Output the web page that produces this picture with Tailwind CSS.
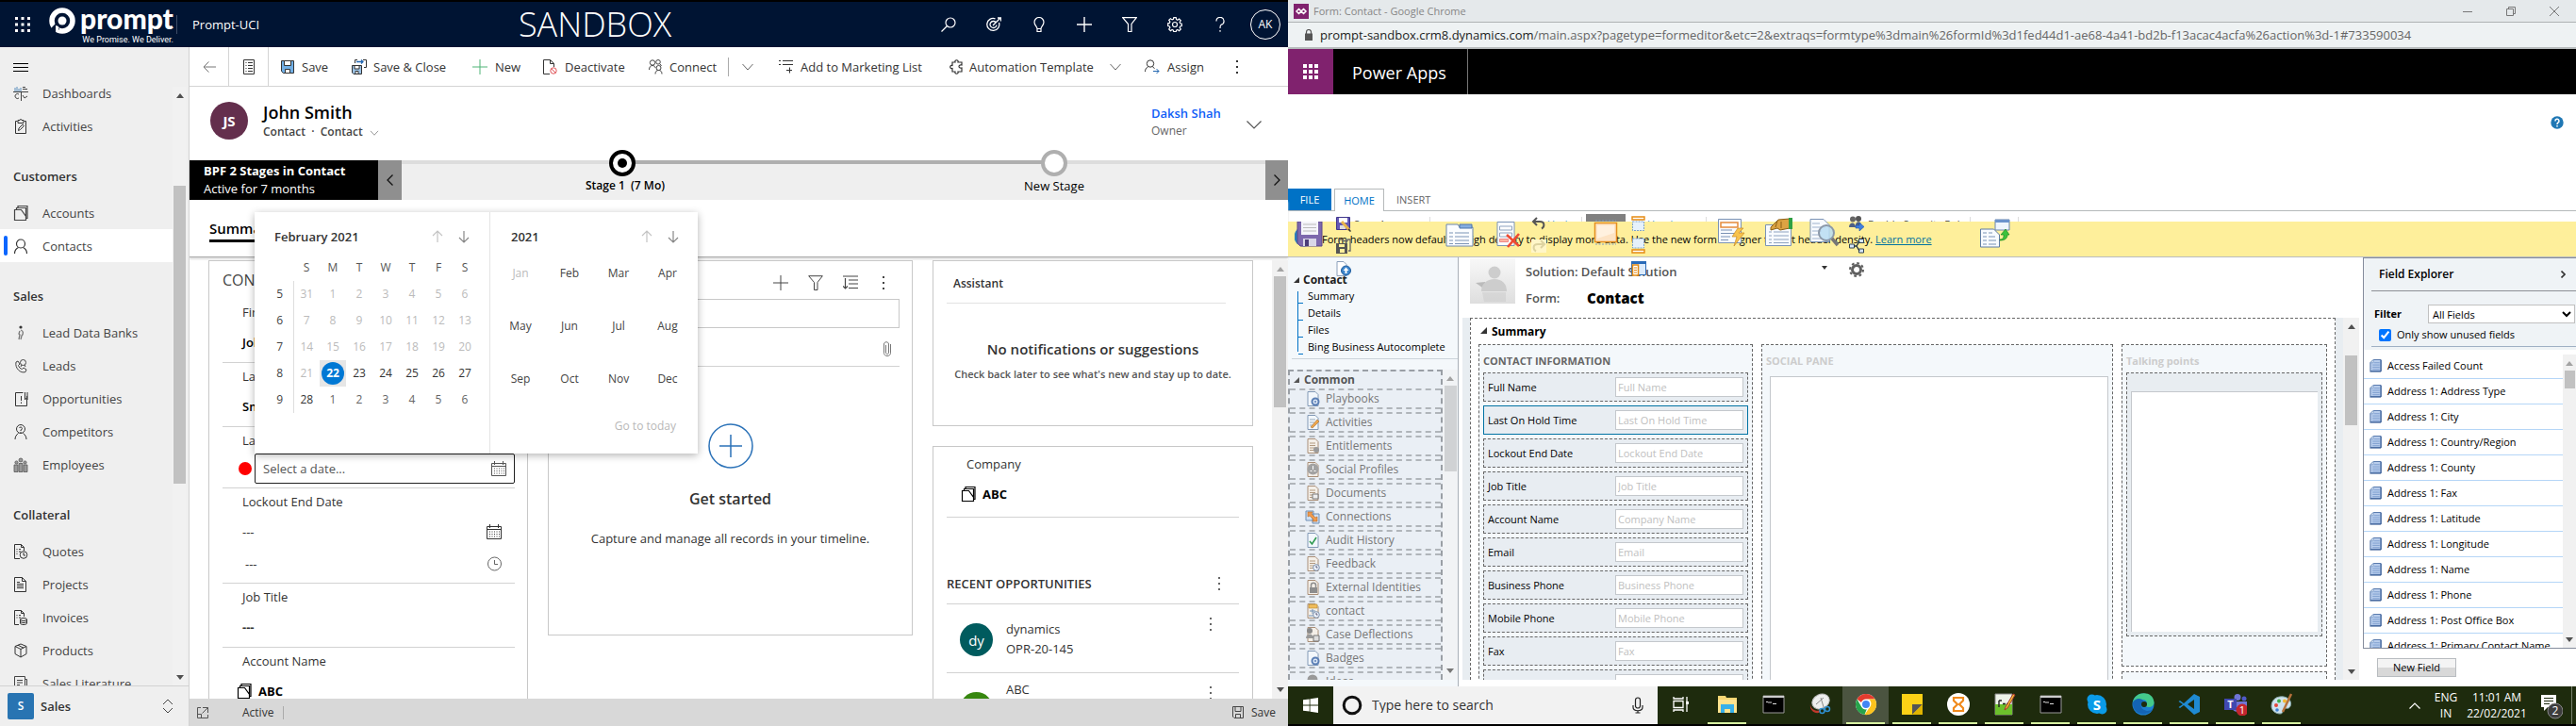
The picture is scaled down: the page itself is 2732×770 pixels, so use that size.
<!DOCTYPE html>
<html lang="en">
<head>
<meta charset="utf-8">
<title>Prompt-UCI and form editor</title>
<script src="https://cdn.jsdelivr.net/npm/@tailwindcss/browser@4"></script>
</head>
<body class="h-screen overflow-hidden flex bg-white font-['Open_Sans',sans-serif] text-[13px] leading-4 text-[#333]">

<svg class="hidden" aria-hidden="true">
  <symbol id="i-dash" viewBox="0 0 16 16"><path d="M2 2v4M4 1v5M6 3v3M8 2v4" stroke="#5b8fbd" fill="none"/><path d="M0 6.5h16M8.5 6v10M10 3.5h5M10 1.500h3" stroke="#444" fill="none"/><path d="M6 9a2.500 2.500 0 1 0 0 4M10 10l2 3 3-2" stroke="#444" fill="none"/></symbol>
  <symbol id="i-act" viewBox="0 0 16 16" fill="none" stroke="#333"><path d="M4.500 2.500h-2v13h11v-13h-2M5 1.500h2a1 1 0 0 1 2 0h2v3H5z"/><path d="M5.500 12.500l.5-2.500 4-4 1.500 1.500-4 4z"/></symbol>
  <symbol id="i-acc" viewBox="0 0 16 16" fill="none" stroke="currentColor" stroke-width="1.200"><path d="M1.500 4.500h7l5 7V15.500H1.500zM3.500 4.500v-2h10v11M5 2.500V.500h10v13h-1.500"/></symbol>
  <symbol id="i-con" viewBox="0 0 16 16" fill="none" stroke="#333" stroke-width="1.200"><circle cx="8" cy="5.500" r="4.500"/><path d="M1.500 16c0-3 2-5.500 4-6.500M14.500 16c0-3-2-5.500-4-6.500"/></symbol>
  <symbol id="i-lead" viewBox="0 0 16 16"><circle cx="8" cy="2" r="1.600" fill="#333"/><path d="M8 5c3 1 3 4 1 6l-1 4M7 6l-1 3 1 1-1 5" stroke="#777" fill="none" stroke-width="1.300"/></symbol>
  <symbol id="i-leads" viewBox="0 0 16 16" fill="none" stroke="#444"><path d="M3 4l2-1 2 3-1.500 1.500c.5 2 2 3.500 4 4L11 10l3 2-1 2.500c-5 2-11.500-4-10-10.500z"/><circle cx="10.500" cy="4.500" r="3"/><path d="M9 7l-1 2M12 7l1 2"/></symbol>
  <symbol id="i-opp" viewBox="0 0 16 16" fill="none" stroke="#333"><path d="M10.500 1.500h-8v14h12V5M12.500 1v8l1.200-1.500L15 9V1"/><path d="M8.500 5v5M8.500 11.500V13"/></symbol>
  <symbol id="i-comp" viewBox="0 0 16 16" fill="none" stroke="#333"><circle cx="8" cy="5" r="4.500"/><path d="M6.500 4a1.500 1.500 0 1 1 1.500 2v1M2 16c0-3 1.500-5 3.500-6.500M14 16c0-3-1.500-5-3.500-6.500M8 8v1"/></symbol>
  <symbol id="i-emp" viewBox="0 0 16 16" fill="#999" stroke="#555" stroke-width=".8"><circle cx="8" cy="3" r="2"/><circle cx="3.500" cy="5.500" r="1.600"/><circle cx="12.500" cy="5.500" r="1.600"/><path d="M6 15.500V6.500h4v9zM1 15.500V8h4v7.500zM11 15.500V8h4v7.500z"/></symbol>
  <symbol id="i-quote" viewBox="0 0 16 16" fill="none" stroke="#333"><path d="M7 15.500H1.500V.500h7l3 3V7M8.500.500v3h3M3.500 5.500h1M3.500 8h1M3.500 10.500h1M6 5.500h2M6 8h2"/><circle cx="11" cy="11.500" r="3.800"/><path d="M11 9v3h2"/></symbol>
  <symbol id="i-proj" viewBox="0 0 16 16" fill="none" stroke="#333"><path d="M1.500.500h8l4 4v11h-12zM9.500.500v4h4M4 7.500h7M4 9.500h7M4 11.500h7M4 5.500h3"/></symbol>
  <symbol id="i-inv" viewBox="0 0 16 16" fill="none" stroke="#333"><path d="M6 15.500H1.500V.500h7l3 3V7M8.500.500v3h3M3.500 5.500h1M3.500 8h1M6 5.500h2M6 8h2"/><ellipse cx="11" cy="10" rx="3.500" ry="1.500"/><path d="M7.500 10v4c0 2 7 2 7 0v-4M7.500 12c0 2 7 2 7 0"/></symbol>
  <symbol id="i-prod" viewBox="0 0 16 16" fill="none" stroke="#333"><path d="M8 1l6 2.500v8L8 15l-6-3.500v-8zM2 3.500L8 6.500l6-3M8 6.500V15M5 2.200l6 3"/></symbol>
  <symbol id="i-lit" viewBox="0 0 16 16" fill="none" stroke="#444"><path d="M1.500.500h11v3h2v12h-13zM4 4.500h6M4 7h6M4 9.500h3M12.500 3.500v12M8.500 10.500h3v5"/></symbol>
  <symbol id="i-down" viewBox="0 0 12 8" fill="none" stroke="currentColor"><path d="M.500 1l5.500 6 5.500-6"/></symbol>
  <symbol id="i-dots" viewBox="0 0 4 16" fill="currentColor"><path d="M1 1h2v2H1zM1 7h2v2H1zM1 13h2v2H1z"/></symbol>
  <symbol id="i-plus" viewBox="0 0 16 16" fill="none" stroke="currentColor"><path d="M8 0v16M0 8h16"/></symbol>
  <symbol id="i-filter" viewBox="0 0 16 16" fill="none" stroke="currentColor"><path d="M.700.700h14.600L10 7.500v8H6.500v-8z"/></symbol>
  <symbol id="i-cal" viewBox="0 0 16 16" fill="none" stroke="currentColor"><path d="M.500 2.500h15v13H.500zM.500 5.500h15M3.500 0v4M12.500 0v4"/><path d="M3 8h11M3 10.500h11M3 13h11" stroke-dasharray="1 1.500"/></symbol>
  <symbol id="i-up" viewBox="0 0 12 14" fill="none" stroke="currentColor" stroke-width="1.200"><path d="M6 1v12M1 6l5-5 5 5"/></symbol>
  <symbol id="i-dn" viewBox="0 0 12 14" fill="none" stroke="currentColor" stroke-width="1.200"><path d="M6 1v12M1 8l5 5 5-5"/></symbol>
  <symbol id="i-page" viewBox="0 0 13 15"><path d="M4 .500h8.500v13H.500V4z" fill="#b8cdec" stroke="#4a6fa5"/><path d="M.500 4H4V.500z" fill="#eef4fc" stroke="#6f91c2" stroke-width=".8"/><path d="M5 4h6M3 6.500h8M3 9h8M3 11.500h8" stroke="#7b9cce"/><path d="M12.500 1v13H0" fill="none" stroke="#2f5591"/></symbol>
</svg>

<!-- Customer record window -->
<section class="flex-1 min-w-0 h-full flex flex-col border-t-2 border-black">
  <header class="h-12 shrink-0 bg-[#001433] text-white flex items-center pl-4 pr-2">
    <button aria-label="App launcher"><svg class="w-4 h-4" viewBox="0 0 16 16" fill="#fff"><path d="M0 0h3v3H0zM6.500 0h3v3h-3zM13 0h3v3h-3zM0 6.500h3v3H0zM6.500 6.500h3v3h-3zM13 6.500h3v3h-3zM0 13h3v3H0zM6.500 13h3v3h-3zM13 13h3v3h-3z"/></svg></button>
    <div class="ml-5 w-[132px] flex items-start gap-[5px] h-10">
      <svg class="w-7 h-7 mt-[2px] shrink-0" viewBox="0 0 28 28"><circle cx="14" cy="14" r="11" fill="none" stroke="#fff" stroke-width="5.500"/><circle cx="14" cy="14" r="4.500" fill="#fff"/><path d="M7 17l-6 6 5 4 5-4z" fill="#001433"/><path d="M7 19v7h3v-6z" fill="#fff"/></svg>
      <div class="flex flex-col items-end">
        <span class="font-['Lato'] font-black text-[30px] leading-8 h-7 -mt-[3px]">prompt</span>
        <span class="font-['Roboto'] text-[9px] leading-3 h-3 mt-[5px]">We Promise. We Deliver.</span>
      </div>
    </div>
    <span class="w-px h-5 bg-[#3d4c66] ml-[3px]"></span>
    <span class="ml-4 text-[13px]">Prompt-UCI</span>
    <span class="flex-1 text-center text-[36px] leading-10 font-light pl-[5px]">SANDBOX</span>
    <nav class="flex items-center text-white">
      <button class="w-12 h-8 grid place-items-center" aria-label="Search"><svg class="w-4 h-4" viewBox="0 0 16 16" fill="none" stroke="#fff" stroke-width="1.200"><circle cx="10" cy="6" r="5"/><path d="M6.500 9.500L.500 15.500"/></svg></button>
      <button class="w-12 h-8 grid place-items-center" aria-label="Tasks"><svg class="w-4 h-4" viewBox="0 0 16 16" fill="none" stroke="#fff" stroke-width="1.300"><path d="M13.500 6a6.500 6.500 0 1 1-4-4.200M10 5.500a3.500 3.500 0 1 0 1 3M7 9l8-8M12 1h3.500v3.500"/></svg></button>
      <button class="w-12 h-8 grid place-items-center" aria-label="Ideas"><svg class="w-4 h-4" viewBox="0 0 16 16" fill="none" stroke="#fff" stroke-width="1.200"><path d="M6 12.500C6 10 3 9 3 5.500a5 5 0 0 1 10 0C13 9 10 10 10 12.500zM6 12.500v3h4v-3"/></svg></button>
      <button class="w-12 h-8 grid place-items-center" aria-label="Create"><svg class="w-4 h-4" stroke-width="1.400"><use href="#i-plus"/></svg></button>
      <button class="w-12 h-8 grid place-items-center" aria-label="Filter"><svg class="w-4 h-4" stroke-width="1.200"><use href="#i-filter"/></svg></button>
      <button class="w-12 h-8 grid place-items-center" aria-label="Settings"><svg class="w-4 h-4" viewBox="0 0 16 16" fill="none" stroke="#fff" stroke-width="1.200"><circle cx="8" cy="8" r="2.500"/><path d="M6.800.700h2.400l.4 2 1.300.6 1.700-1.200 1.700 1.700-1.200 1.700.6 1.300 1.600.4v2.400l-1.600.4-.6 1.300 1.200 1.700-1.700 1.700-1.700-1.200-1.300.6-.4 1.600H6.800l-.4-1.600-1.300-.6-1.700 1.200-1.700-1.700 1.200-1.700-.6-1.300-1.600-.4V6.800l1.600-.4.6-1.300-1.200-1.700 1.700-1.700 1.700 1.200 1.300-.6z"/></svg></button>
      <button class="w-12 h-8 grid place-items-center" aria-label="Help"><svg class="w-4 h-4" viewBox="0 0 16 16" fill="none" stroke="#fff" stroke-width="1.200"><path d="M4 4.500a4 4 0 1 1 5 3.800C8 8.800 8 9.500 8 12M8 14v1.800"/></svg></button>
      <button class="ml-2 w-8 h-8 rounded-full border border-white text-[12px] grid place-items-center">AK</button>
    </nav>
  </header>

  <div class="flex-1 min-h-0 flex">
    <!-- Site map -->
    <aside class="w-[201px] shrink-0 bg-[#efefef] border-r border-[#d2d2d2] flex flex-col">
      <button class="h-[42px] shrink-0 pl-[14px] pt-[1px]" aria-label="Collapse menu"><svg class="w-4 h-[10px]" viewBox="0 0 16 10" stroke="#000"><path d="M0 .500h16M0 4.500h16M0 8.500h16"/></svg></button>
      <div class="flex-1 min-h-0 flex overflow-hidden">
        <nav id="nav" class="flex-1 -mt-[11px] text-[14px]"></nav>
        <div class="w-[15px] mr-[2px] flex flex-col items-center bg-[#f1f1f1]">
          <svg class="w-2 h-[5px] mt-[7px]" viewBox="0 0 8 5"><path d="M4 0l4 5H0z" fill="#505050"/></svg>
          <span class="w-[13px] h-[316px] mt-[93px] bg-[#c1c1c1]"></span>
          <svg class="w-2 h-[5px] mt-auto mb-[6px]" viewBox="0 0 8 5"><path d="M4 5l4-5H0z" fill="#505050"/></svg>
        </div>
      </div>
      <button class="h-[43px] shrink-0 border-t border-[#d2d2d2] flex items-center px-2 text-[13px] font-semibold">
        <span class="w-7 h-7 bg-[#2874b2] rounded-[2px] text-white grid place-items-center text-[12px]">S</span>
        <span class="ml-[7px]">Sales</span>
        <svg class="w-3 h-4 ml-auto mr-[8px]" viewBox="0 0 12 16" fill="none" stroke="#444"><path d="M1 6l5-5 5 5M1 10l5 5 5-5"/></svg>
      </button>
    </aside>

    <main class="relative flex-1 min-w-0 flex flex-col bg-white">
      <div class="h-[42px] shrink-0 border-b border-[#d4d4d4] flex items-center text-[13px] whitespace-nowrap">
        <button class="w-[42px] h-full border-r border-[#d4d4d4] grid place-items-center" aria-label="Back"><svg class="w-[14px] h-3" viewBox="0 0 14 12" fill="none" stroke="#777"><path d="M14 6H1M6.500.500L1 6l5.500 5.500"/></svg></button>
        <button class="w-[42px] h-full border-r border-[#d4d4d4] grid place-items-center" aria-label="Form"><svg class="w-3 h-4" viewBox="0 0 12 16" fill="none" stroke="#333"><path d="M.500.500h11v15H.500zM2.500 3.500h1M2.500 6.500h1M2.500 9.500h1M2.500 12.500h1M5 3.500h5M5 6.500h5M5 9.500h5M5 12.500h5"/></svg></button>
        <button class="ml-[13px] w-[75px] flex items-center gap-2"><svg class="w-[14px] h-[14px]" viewBox="0 0 14 14"><path d="M.500.500h13v13H2.500l-2-2z" fill="#71afe5" stroke="#333"/><path d="M3.500.500h7v5h-7z" fill="#fff" stroke="#333"/><path d="M4.500 9.500h5v4h-5z" fill="#fff" stroke="#333"/></svg>Save</button>
        <button class="w-[128px] flex items-center gap-[7px]"><svg class="w-4 h-4" viewBox="0 0 16 16"><path d="M.500 6.500h10v9H2l-1.500-1.500z" fill="#9cc3e6" stroke="#333"/><path d="M3 6.500h5V10H3zM4 12.500h3v3H4z" fill="#fff" stroke="#333"/><path d="M3.500 4V.500H6M12 .500h3.500v8H13" fill="none" stroke="#333"/><path d="M5 2.500h7M10 .500l2 2-2 2" fill="none" stroke="#2266b0" stroke-width="1.300"/></svg>Save &amp; Close</button>
        <button class="w-[75px] flex items-center gap-2"><svg class="w-4 h-4 text-[#4fb477]"><use href="#i-plus"/></svg>New</button>
        <button class="w-[112px] flex items-center gap-2"><svg class="w-[15px] h-4" viewBox="0 0 15 16" fill="none"><path d="M7 15.500H.500V.500h7l4 4V8M7.500.500v4h4" stroke="#333"/><circle cx="11" cy="12" r="3.200" stroke="#e0565b"/><path d="M8.800 9.800l4.400 4.400" stroke="#e0565b"/></svg>Deactivate</button>
        <button class="w-[84px] flex items-center gap-[7px]"><svg class="w-[15px] h-4" viewBox="0 0 15 16" fill="none" stroke="#444"><circle cx="4" cy="3.500" r="2.700"/><circle cx="10" cy="2.800" r="2.300"/><circle cx="10.500" cy="9" r="2.500"/><path d="M.500 11c0-3 1.500-4.500 3.500-4.500S7 8 7 9M12 5l1.500 2M7 15.500c0-3 1.500-4 3.500-4s3.500 1 3.500 4"/></svg>Connect</button>
        <span class="w-px h-5 bg-[#aaa]"></span>
        <button class="w-[53px] pl-[14px]" aria-label="More connect options"><svg class="w-3 h-2 text-[#666]"><use href="#i-down"/></svg></button>
        <button class="w-[181px] flex items-center gap-[7px]"><svg class="w-4 h-[14px]" viewBox="0 0 16 14" fill="none" stroke="#333"><path d="M4 .500h11M4 4.500h11M0 .500h2M0 4.500h2M8 10.500h6M11.500 7.500v6"/></svg>Add to Marketing List</button>
        <button class="w-[170px] flex items-center gap-[7px]"><svg class="w-[14px] h-4" viewBox="0 0 14 16" fill="none" stroke="#333" stroke-width="1.200"><path d="M3 3h3c-1-3 4-3 3 0h4v3c-4-1-4 4 0 3v4H9c1 3-4 3-3 0H3V9.500c-3 1-3-4 0-3z"/></svg>Automation Template</button>
        <button class="w-[37px]" aria-label="More templates"><svg class="w-3 h-2 text-[#666]"><use href="#i-down"/></svg></button>
        <button class="w-[96px] flex items-center gap-2"><svg class="w-4 h-4" viewBox="0 0 16 16" fill="none" stroke="#333"><circle cx="6" cy="4.500" r="3.700"/><path d="M.500 13c0-2.500 1-4 3-5M8.500 8l2 1.500"/><path d="M9 12.500h6M12.500 10l2.500 2.500-2.500 2.500" stroke="#2266b0"/></svg>Assign</button>
        <button aria-label="More commands"><svg class="w-1 h-4"><use href="#i-dots"/></svg></button>
      </div>

      <div class="h-[78px] shrink-0 flex items-start pl-[22px] pr-7">
        <span class="mt-4 w-10 h-10 rounded-full bg-[#642f4d] text-white text-[15px] font-bold grid place-items-center">JS</span>
        <div class="ml-4 mt-[15px]">
          <h1 class="text-[18px] leading-6 font-semibold text-black">John Smith</h1>
          <p class="leading-[18px] text-[12px] font-semibold text-[#444]">Contact &nbsp;·&nbsp; Contact <svg class="inline w-[10px] h-[6px] ml-1 text-[#777]" viewBox="0 0 12 8"><use href="#i-down"/></svg></p>
        </div>
        <div class="ml-auto mt-[19px] w-[101px]">
          <a href="#" class="block leading-[18px] font-semibold text-[#1160f7]">Daksh Shah</a>
          <p class="text-[12px] leading-5 text-[#666]">Owner</p>
        </div>
        <button class="mt-9" aria-label="Expand header"><svg class="w-4 h-[9px]" viewBox="0 0 16 9" fill="none" stroke="#555" stroke-width="1.200"><path d="M.500.500L8 8 15.500.500"/></svg></button>
      </div>

      <div class="h-[42px] shrink-0 flex">
        <div class="w-[200px] bg-black text-white pl-[15px] pt-[2px] leading-[19px]">
          <p class="font-bold">BPF 2 Stages in Contact</p><p>Active for 7 months</p>
        </div>
        <button class="w-[25px] bg-[#8f8f8f] grid place-items-center" aria-label="Previous stage"><svg class="w-[7px] h-3" viewBox="0 0 7 12" fill="none" stroke="#111" stroke-width="1.300"><path d="M6.500.500L1 6l5.500 5.500"/></svg></button>
        <div class="flex-1 bg-[#efefef] flex text-black">
          <div class="flex-1">
            <div class="h-1 flex"><i class="flex-1 bg-[#ddd]"></i><i class="flex-1 bg-[#afafaf]"></i></div>
            <div class="ml-[10px] -mt-[15px] flex flex-col items-center">
              <button class="relative w-7 h-7 rounded-full border-4 border-black bg-white grid place-items-center" aria-label="Stage 1"><i class="w-[10px] h-[10px] rounded-full bg-black"></i></button>
              <span class="mt-[2px] pl-[6px] text-[12px] font-semibold">Stage 1 &nbsp;(7 Mo)</span>
            </div>
          </div>
          <div class="flex-1">
            <div class="h-1 flex"><i class="flex-1 bg-[#afafaf]"></i><i class="flex-1 bg-[#ddd]"></i></div>
            <div class="ml-[10px] -mt-[15px] flex flex-col items-center">
              <button class="relative w-7 h-7 rounded-full border-4 border-[#afafaf] bg-white" aria-label="New Stage"></button>
              <span class="mt-[2px]">New Stage</span>
            </div>
          </div>
        </div>
        <button class="w-6 bg-[#8f8f8f] grid place-items-center" aria-label="Next stage"><svg class="w-[7px] h-3" viewBox="0 0 7 12" fill="none" stroke="#111" stroke-width="1.300"><path d="M.500.500L6 6 .500 11.500"/></svg></button>
      </div>

      <div class="h-[61px] shrink-0 border-b border-[#aaa] shadow-[0_2px_2px_#ddd] pl-[21px] pt-[18px]">
        <button class="block h-[27px] leading-5 text-[15px] font-semibold text-black border-b-3 border-black">Summary</button>
      </div>

      <div class="flex-1 min-h-0 flex overflow-hidden pt-[3px]">
        <div class="flex-1 grid grid-cols-[339fr_387fr_340fr] gap-x-[21px] pl-5 pr-5 items-start">
          <section class="border border-b-0 border-[#c8c8c8] pl-[14px] pr-[13px] h-[470px]">
            <h2 class="h-10 flex items-center text-[16px] text-[#444]">CONTACT INFORMATION</h2>
            <div class="h-[68px] border-b border-[#d2d2d2] pl-[21px]"><p class="h-[29px] leading-[29px]">First Name</p><p class="h-[34px] leading-[34px] font-semibold text-black">John</p></div>
            <div class="h-[68px] border-b border-[#d2d2d2] pl-[21px]"><p class="h-[29px] leading-[29px]">Last Name</p><p class="h-[34px] leading-[34px] font-semibold text-black">Smith</p></div>
            <div class="h-[65px] border-b border-[#d2d2d2]">
              <label for="hold" class="block h-7 leading-7 pl-[21px]">Last On Hold Time</label>
              <div class="flex items-center">
                <i class="ml-[17px] w-[14px] h-[14px] rounded-full bg-[#f00] mr-[3px]"></i>
                <span class="flex-1 min-w-0 h-8 border border-[#222] rounded-[2px] flex items-center px-2">
                  <input id="hold" placeholder="Select a date..." class="flex-1 min-w-0 placeholder:text-[#555] outline-none">
                  <svg class="w-4 h-4 text-[#555]"><use href="#i-cal"/></svg>
                </span>
              </div>
            </div>
            <div class="h-[101px] border-b border-[#d2d2d2] pl-[21px] pr-[14px]">
              <p class="h-[29px] leading-[29px]">Lockout End Date</p>
              <div class="h-[34px] flex items-center justify-between"><span>---</span><svg class="w-4 h-4"><use href="#i-cal"/></svg></div>
              <div class="h-[34px] pl-[3px] flex items-center justify-between"><span>---</span><svg class="w-4 h-4" viewBox="0 0 16 16" fill="none" stroke="#666"><circle cx="8.500" cy="8" r="7"/><path d="M8.500 4v4.500H12"/></svg></div>
            </div>
            <div class="h-[68px] border-b border-[#d2d2d2] pl-[21px]"><p class="h-[29px] leading-[29px]">Job Title</p><p class="h-[34px] leading-[34px] font-bold">---</p></div>
            <div class="pl-[15px]"><p class="pl-[6px] h-[29px] leading-[29px]">Account Name</p><p class="h-[34px] flex items-center gap-[7px] font-bold text-black"><svg class="w-4 h-4"><use href="#i-acc"/></svg>ABC</p></div>
          </section>

          <section class="border border-[#c8c8c8] h-[398px] px-[13px]">
            <div class="h-10 flex items-center justify-end gap-[21px] pt-[5px] text-[#444]">
              <h2 class="mr-auto text-[15px]">Timeline</h2>
              <button aria-label="Add record"><svg class="w-4 h-4"><use href="#i-plus"/></svg></button>
              <button aria-label="Filter timeline"><svg class="w-4 h-4"><use href="#i-filter"/></svg></button>
              <button aria-label="Sort"><svg class="w-4 h-4" viewBox="0 0 16 16" fill="none" stroke="currentColor" stroke-width="1.200"><path d="M0 1h16M6 5h10M6 9h10M6 13.500h10M2.500 3v11M0 11.500l2.500 2.500L5 11.500"/></svg></button>
              <button class="mr-[15px] ml-[4px]" aria-label="Timeline options"><svg class="w-1 h-4"><use href="#i-dots"/></svg></button>
            </div>
            <input aria-label="Search timeline" class="w-full h-[31px] border border-[#c8c8c8]">
            <div class="h-[41px] border-b border-[#d2d2d2] flex items-center justify-end pr-[9px] pt-1"><svg class="w-2 h-4" viewBox="0 0 8 16" fill="none" stroke="#777"><path d="M7.500 3v9.500c0 4-7 4-7 0V3c0-3 5-3 5 0v9c0 2-3 2-3 0V4"/></svg></div>
            <div class="flex flex-col items-center">
              <button class="mt-[60px]" aria-label="Get started"><svg class="w-12 h-12" viewBox="0 0 48 48" fill="none" stroke="#2b72b8" stroke-width="1.500"><circle cx="24" cy="24" r="23"/><path d="M24 12v24M12 24h24"/></svg></button>
              <p class="mt-5 text-[16px] leading-6 font-semibold">Get started</p>
              <p class="mt-5 leading-5">Capture and manage all records in your timeline.</p>
            </div>
          </section>

          <div class="min-w-0">
            <section class="border border-[#c8c8c8] h-[176px] px-[14px]">
              <h2 class="h-[45px] mr-[14px] border-b border-[#e2e2e2] pl-[7px] flex items-center pt-1 font-semibold text-[12px]">Assistant</h2>
              <p class="mt-9 text-[15px] leading-6 font-semibold text-center">No notifications or suggestions</p>
              <p class="mt-[7px] text-[11px] text-center font-semibold text-[#555] whitespace-nowrap">Check back later to see what's new and stay up to date.</p>
            </section>
            <section class="mt-[21px] border border-b-0 border-[#c8c8c8] px-[14px] pt-[1px] h-[300px]">
              <p class="pl-[21px] h-[34px] leading-[34px]">Company</p>
              <p class="pl-[15px] h-[40px] border-b border-[#d2d2d2] pb-[9px] flex items-center gap-[7px] font-bold text-black"><svg class="w-4 h-4"><use href="#i-acc"/></svg>ABC</p>
              <div class="mt-[49px] h-[43px] border-b border-[#d2d2d2] flex items-center justify-between pr-[19px]"><h2 class="font-semibold">RECENT OPPORTUNITIES</h2><button aria-label="More"><svg class="w-1 h-4 text-[#666]"><use href="#i-dots"/></svg></button></div>
              <div class="h-[73px] border-b border-[#d2d2d2] flex items-start pl-[14px] pr-[28px]">
                <span class="mt-5 w-[35px] h-[35px] rounded-full bg-[#005b5e] text-white text-[15px] grid place-items-center">dy</span>
                <div class="ml-[14px] mt-4 leading-[21px]"><p>dynamics</p><p>OPR-20-145</p></div>
                <svg class="ml-auto mt-[13px] w-1 h-4 text-[#666]"><use href="#i-dots"/></svg>
              </div>
              <div class="flex items-start pl-[14px] pr-[28px]">
                <span class="mt-5 w-[35px] h-[35px] rounded-full bg-[#37870f]"></span>
                <p class="ml-[14px] mt-[7px] leading-[21px]">ABC</p>
                <svg class="ml-auto mt-[13px] w-1 h-4 text-[#666]"><use href="#i-dots"/></svg>
              </div>
            </section>
          </div>
        </div>
        <div class="w-[17px] flex flex-col items-center bg-[#f1f1f1]">
          <svg class="w-2 h-[5px] mt-[7px]" viewBox="0 0 8 5"><path d="M4 0l4 5H0z" fill="#a3a3a3"/></svg>
          <span class="w-[13px] h-[139px] mt-[5px] bg-[#c1c1c1]"></span>
          <svg class="w-2 h-[5px] mt-auto mb-[7px]" viewBox="0 0 8 5"><path d="M4 5l4-5H0z" fill="#505050"/></svg>
        </div>
      </div>

      <footer class="h-[29px] shrink-0 bg-[#d8d8d8] flex items-center px-[7px] text-[12px]">
        <button aria-label="Open in new window"><svg class="w-[14px] h-[14px]" viewBox="0 0 14 14" fill="none" stroke="#555"><path d="M5 1.500H1.500v11h11V9M7 1.500h5.500V7M12.500 1.500l-6 6M1.500 8.500h4v4"/></svg></button>
        <span class="ml-[35px]">Active</span><span class="ml-[10px] w-px h-[14px] bg-[#aaa]"></span>
        <button class="ml-auto mr-[6px] flex items-center gap-2"><svg class="w-3 h-[13px]" viewBox="0 0 12 13" fill="none" stroke="#444"><path d="M.500.500h11v12H2l-1.500-1.500zM3 .500v5h6v-5M3.500 12.500v-4h5v4"/></svg>Save</button>
      </footer>

      <!-- Date picker -->
      <div class="absolute left-[69px] top-[175px] w-[470px] h-[256px] bg-white shadow-[0_2px_8px_rgba(0,0,0,0.3)] flex text-[12px]">
        <div class="w-[250px] border-r border-[#e4e4e4] px-[13px] pt-[14px]">
          <div class="h-6 pl-2 flex items-center text-[13px] font-semibold"><span>February 2021</span>
            <button class="ml-auto w-7 grid place-items-center text-[#c4c4c4]" aria-label="Previous month"><svg class="w-3 h-[14px]"><use href="#i-up"/></svg></button>
            <button class="w-7 grid place-items-center text-[#888]" aria-label="Next month"><svg class="w-3 h-[14px]"><use href="#i-dn"/></svg></button></div>
          <table class="mt-[7px] table-fixed w-[224px] border-collapse text-center"><tbody id="cal"></tbody></table>
        </div>
        <div class="flex-1 px-[6px] pt-[14px]">
          <div class="h-6 pl-4 pr-[6px] flex items-center text-[13px] font-semibold"><span>2021</span>
            <button class="ml-auto w-7 grid place-items-center text-[#c4c4c4]" aria-label="Previous year"><svg class="w-3 h-[14px]"><use href="#i-up"/></svg></button>
            <button class="w-7 grid place-items-center text-[#888]" aria-label="Next year"><svg class="w-3 h-[14px]"><use href="#i-dn"/></svg></button></div>
          <div id="months" class="-mt-px grid grid-cols-4"></div>
          <p class="text-right pr-[17px] mt-[14px]"><button class="text-[#b8b8b8]">Go to today</button></p>
        </div>
      </div>
    </main>
  </div>
</section>

<!-- Form editor window -->
<section class="flex-1 min-w-0 h-full flex flex-col">
  <div class="h-6 shrink-0 bg-[#e5e9eb] border-b border-[#aeb2b3] flex items-center pl-[6px] text-[12px] text-[#858585]">
    <svg class="w-4 h-4" viewBox="0 0 16 16"><path d="M0 0h16v16H0z" fill="#80226e"/><path d="M5.500 5.500L8 8l-2.500 2.500L3 8zM10.500 5.500L13 8l-2.500 2.500L8 8z" fill="none" stroke="#fff" stroke-width="1.500"/></svg>
    <span class="ml-[5px] text-[11px]">Form: Contact - Google Chrome</span>
    <button class="ml-auto w-[46px] grid place-items-center" aria-label="Minimize"><svg class="w-[10px] h-[10px]" viewBox="0 0 10 10" stroke="#777"><path d="M0 5.500h10"/></svg></button>
    <button class="w-[46px] grid place-items-center" aria-label="Restore"><svg class="w-[10px] h-[10px]" viewBox="0 0 10 10" stroke="#777" fill="none"><path d="M.500 2.500h7v7h-7zM2.500 2.500v-2h7v7h-2"/></svg></button>
    <button class="w-[46px] grid place-items-center" aria-label="Close"><svg class="w-[10px] h-[10px]" viewBox="0 0 10 10" stroke="#777"><path d="M0 0l10 10M10 0L0 10"/></svg></button>
  </div>
  <div class="h-7 shrink-0 bg-[#eef2f3] border-b-2 border-[#b5b9ba] flex items-center pl-[18px] text-[13px] text-[#666]">
    <svg class="w-2 h-3" viewBox="0 0 8 12"><path d="M0 4.500h8V12H0z" fill="#555"/><path d="M1.500 5V3a2.500 2.500 0 0 1 5 0v2" fill="none" stroke="#555" stroke-width="1.200"/></svg>
    <span class="ml-2 whitespace-nowrap"><span class="text-[#222]">prompt-sandbox.crm8.dynamics.com</span>/main.aspx?pagetype=formeditor&amp;etc=2&amp;extraqs=formtype%3dmain%26formId%3d1fed44d1-ae68-4a41-bd2b-f13acac4acfa%26action%3d-1#733590034</span>
  </div>
  <div class="h-12 shrink-0 bg-black flex items-center text-white text-[18px]">
    <button class="w-12 h-12 bg-[#80226e] grid place-items-center" aria-label="App launcher"><svg class="w-4 h-4" viewBox="0 0 16 16" fill="#fff"><path d="M0 0h4v4H0zM6 0h4v4H6zM12 0h4v4h-4zM0 6h4v4H0zM6 6h4v4H6zM12 6h4v4h-4zM0 12h4v4H0zM6 12h4v4H6zM12 12h4v4h-4z"/></svg></button>
    <span class="w-[143px] pl-5 h-12 leading-[50px] border-r border-[#777]">Power Apps</span>
  </div>
  <div class="h-[100px] shrink-0 flex justify-end pt-[23px] pr-[13px]"><svg class="w-[14px] h-[14px]" viewBox="0 0 14 14"><circle cx="7" cy="7" r="6.700" fill="#1f77b4"/><path d="M5 5.500a2 2 0 1 1 3 1.500C7 7.700 7 8 7 9M7 10v1.500" fill="none" stroke="#fff" stroke-width="1.500"/></svg></div>
  <div class="h-6 shrink-0 flex text-[11px] leading-6 border-b border-[#b5b9ba]">
    <button class="w-[46px] bg-[#0072c6] text-white">FILE</button>
    <button class="ml-[3px] w-[53px] h-6 bg-white border border-b-0 border-[#b5b9ba] text-[#0072c6]">HOME</button>
    <button class="ml-[13px] text-[#666]">INSERT</button>
  </div>

  <div class="relative shrink-0 z-10">
    <div class="h-[11px] overflow-hidden flex text-[11px] text-[#444] leading-4 pt-[6px] whitespace-nowrap">
      <span class="pl-[70px] w-[151px] border-r border-[#ddd] shrink-0">Save As</span>
      <span class="pl-[124px] w-[161px] border-r border-[#ddd] shrink-0 text-[#3b8fd0]">Undo</span>
      <span class="w-[42px] bg-[#808080] ml-1 h-4 -mt-[3px] shrink-0"></span>
      <span class="pl-[23px] w-[86px] border-r border-[#ddd] shrink-0 text-[#3b8fd0]">Header</span>
      <span class="pl-[171px] w-[280px] border-r border-[#ddd] shrink-0">Enable Security Roles</span>
      <span class="w-[51px] border-r border-[#ddd] shrink-0"></span>
    </div>
    <div class="h-[38px] bg-[#feef9b] border-b border-[#b9bcc0] pl-[36px] text-[11px] leading-[38px] text-black whitespace-nowrap">Form headers now default to high density to display more data. Use the new form designer to edit header density. <a href="#" class="text-[#0072a0] underline">Learn more</a></div>
    <div id="ribbon"></div>
  </div>

  <div class="flex-1 min-h-0 flex">
    <!-- Form navigation -->
    <aside class="w-[181px] shrink-0 bg-[#f4f8fb] border-r border-[#a9b0b8] text-[12px] text-black flex flex-col">
      <h2 class="mt-[15px] pl-[6px] flex items-center gap-1 leading-[18px] font-bold text-[#222]"><svg class="w-[6px] h-[6px]" viewBox="0 0 6 6"><path d="M6 0v6H0z" fill="#333"/></svg>Contact</h2>
      <div id="tree" class="ml-[10px] border-l border-[#0072c6] h-[64px] mt-[3px] text-[11px] leading-[18px] flex flex-col"></div>
      <div class="mt-[7px] ml-1 border-t border-[#ccd3da] h-3 shrink-0"></div>
      <div class="flex-1 min-h-0 flex mb-[7px] overflow-hidden">
        <div class="w-[164px] shrink-0 border-t-2 border-x-2 border-dashed border-[#9a9fa5] bg-[#eaeff5]">
          <h2 class="h-[18px] pl-1 flex items-center gap-[5px] font-bold text-[#555]"><svg class="w-[6px] h-[6px]" viewBox="0 0 6 6"><path d="M6 0v6H0z" fill="#555"/></svg>Common</h2>
          <ul id="common" class="text-[#777]"></ul>
        </div>
        <div class="flex-1 flex flex-col items-center bg-[#f1f3f5]">
          <svg class="w-2 h-[5px] mt-[7px]" viewBox="0 0 8 5"><path d="M4 0l4 5H0z" fill="#a3a3a3"/></svg>
          <span class="w-[13px] h-[91px] mt-[5px] bg-[#d0d2d4]"></span>
          <svg class="w-2 h-[5px] mt-auto mb-[7px]" viewBox="0 0 8 5"><path d="M4 5l4-5H0z" fill="#777"/></svg>
        </div>
      </div>
    </aside>

    <main class="flex-1 min-w-0 pl-1 pr-1 flex flex-col mb-[7px]">
      <div class="h-16 shrink-0 flex pl-2 pt-[1px]">
        <svg class="w-12 h-12" viewBox="0 0 48 48"><defs><linearGradient id="ph" x2="0" y2="1"><stop stop-color="#f8f8f8"/><stop offset="1" stop-color="#dedede"/></linearGradient></defs><path d="M0 0h48v48H0z" fill="url(#ph)"/><path d="M6 26l10-1v8z" fill="#bbb"/><circle cx="26" cy="15" r="6.500" fill="#cdcdcd"/><path d="M12 35c0-8 6-13 14-13s13 5 13 13z" fill="#cdcdcd"/><path d="M13 36h25v10H15z" fill="#c9c9c9" opacity=".5"/></svg>
        <div class="ml-[11px] leading-[28px] text-[13px] font-semibold text-[#555]">
          <p>Solution: Default Solution</p>
          <p class="flex"><span class="w-[65px]">Form:</span><b class="text-[15px] text-black">Contact</b></p>
        </div>
      </div>
      <div class="flex-1 min-h-0 flex bg-[#e8edf1] pl-2 overflow-hidden">
        <section class="flex-1 min-w-0 mr-2 bg-white border border-b-0 border-dashed border-[#666] px-2">
          <h2 class="h-[27px] pt-px pl-[2px] flex items-center gap-[5px] text-[12px] font-bold text-black"><svg class="w-[7px] h-[7px] mb-1" viewBox="0 0 6 6"><path d="M6 0v6H0z" fill="#333"/></svg>Summary</h2>
          <div class="grid grid-cols-[291fr_373fr_218fr] gap-x-[9px]">
            <div class="h-[400px] border border-dashed border-[#666] bg-[#f4f8fb] px-1 text-[11px]">
              <h3 class="h-[29px] leading-[33px] font-bold text-[#666]">CONTACT INFORMATION</h3>
              <div id="fields" class="flex flex-col gap-1"></div>
            </div>
            <div class="h-[400px] border border-dashed border-[#666] bg-[#f4f8fb] px-1 text-[11px]">
              <h3 class="h-[33px] leading-[33px] font-bold text-[#ccc]">SOCIAL PANE</h3>
              <div class="ml-1 h-[380px] bg-white border border-[#c4c8cc]"></div>
            </div>
            <div>
              <div class="h-[342px] border border-dashed border-[#666] bg-[#f4f8fb] px-1 text-[11px]">
                <h3 class="h-[29px] leading-[33px] font-bold text-[#ccc]">Talking points</h3>
                <div class="h-[280px] border border-dashed border-[#666] bg-[#e8edf1] px-1 pt-[19px] pb-1"><div class="h-full bg-white border-l border-t border-[#c4c8cc]"></div></div>
              </div>
              <div class="mt-[5px] h-12 border border-dashed border-[#666] bg-[#f4f8fb]"></div>
            </div>
          </div>
        </section>
        <div class="w-[17px] flex flex-col items-center bg-[#f1f1f1]">
          <svg class="w-2 h-[5px] mt-[7px]" viewBox="0 0 8 5"><path d="M4 0l4 5H0z" fill="#505050"/></svg>
          <span class="w-[13px] h-[74px] mt-7 bg-[#c1c1c1]"></span>
          <svg class="w-2 h-[5px] mt-auto mb-[6px]" viewBox="0 0 8 5"><path d="M4 5l4-5H0z" fill="#505050"/></svg>
        </div>
      </div>
    </main>

    <!-- Field explorer -->
    <aside class="w-[226px] shrink-0 flex flex-col text-[11px] text-black">
      <div class="h-[415px] border border-r-0 border-[#858c9c] bg-[#eff3f6] flex flex-col overflow-hidden">
        <div class="ml-2 pl-2 pr-[11px] h-[35px] shrink-0 border-b border-[#8d9096] flex items-center justify-between"><h2 class="font-semibold text-[12px]">Field Explorer</h2><button aria-label="Collapse"><svg class="w-[5px] h-2" viewBox="0 0 5 8" fill="none" stroke="#333" stroke-width="1.600"><path d="M.500.500L4 4 .500 7.500"/></svg></button></div>
        <div class="ml-2 pl-[3px] h-[59px] shrink-0 border-b border-[#9fb0c4]">
          <div class="mt-[14px] flex items-center"><label for="filter" class="w-[57px] font-bold">Filter</label><select id="filter" class="flex-1 mr-px h-5 bg-white border border-[#c0c0c0] text-[11px]"><option>All Fields</option></select></div>
          <div class="mt-1 pl-[5px] flex items-center gap-[6px]"><input id="unused" type="checkbox" checked class="w-[13px] h-[13px] accent-[#0075ff]"><label for="unused">Only show unused fields</label></div>
        </div>
        <div class="mt-[3px] flex-1 min-h-0 bg-white flex overflow-hidden">
          <ul id="attrs" class="flex-1"></ul>
          <div class="w-[14px] mt-[5px] flex flex-col items-center bg-[#f1f1f1]">
            <svg class="w-2 h-[5px] mt-[7px] shrink-0" viewBox="0 0 8 5"><path d="M4 0l4 5H0z" fill="#a3a3a3"/></svg>
            <span class="w-[11px] h-[19px] mt-[5px] bg-[#c1c1c1]"></span>
            <svg class="w-2 h-[5px] mt-auto mb-[6px]" viewBox="0 0 8 5"><path d="M4 5l4-5H0z" fill="#505050"/></svg>
          </div>
        </div>
      </div>
      <button class="mt-[10px] ml-[15px] w-[84px] h-5 border border-[#b8bcc0] bg-linear-to-b from-[#f4f4f4] from-50% to-[#d8d8d8] to-50%">New Field</button>
    </aside>
  </div>

  <!-- Taskbar -->
  <div class="h-[42px] shrink-0 bg-[#1e2b0d] border-b-2 border-black flex text-white text-[12px]">
    <button class="w-12 grid place-items-center" aria-label="Start"><svg class="w-4 h-4" viewBox="0 0 16 16" fill="#fff"><path d="M0 2.300l6.700-.9v6H0zM7.500 1.300L16 0v7.400H7.500zM0 8.400h6.700v6.200L0 13.700zM7.500 8.400H16V16l-8.500-1.200z"/></svg></button>
    <div class="w-[344px] bg-[#f2f2f2] flex items-center px-[9px]">
      <svg class="w-[22px] h-[22px]" viewBox="0 0 22 22"><circle cx="11" cy="11" r="8.800" fill="none" stroke="#111" stroke-width="3"/></svg>
      <input aria-label="Type here to search" placeholder="Type here to search" class="ml-[10px] flex-1 text-[14px] placeholder:text-[#333] outline-none">
      <svg class="w-3 h-[18px] mr-[6px]" viewBox="0 0 12 18" fill="none" stroke="#222" stroke-width="1.200"><rect x="3.500" y="1" width="5" height="11" rx="2.500"/><path d="M1 9v2c0 5 10 5 10 0V9M6 14.500V17M3.500 17h5"/></svg>
    </div>
    <div id="apps" class="flex"></div>
    <div class="ml-auto flex items-center text-center leading-[17px]">
      <svg class="w-3 h-[7px] mr-[13px]" viewBox="0 0 12 7" fill="none" stroke="#fff" stroke-width="1.200"><path d="M.500 6.500L6 1l5.500 5.500"/></svg>
      <p class="w-7">ENG<br>IN</p>
      <p class="w-[80px]">11:01 AM<br>22/02/2021</p>
      <svg class="w-6 h-8 ml-[6px] mr-[9px]" viewBox="0 0 24 32"><path d="M1 5h16v13h-9l-4 4v-4H1z" fill="#fff"/><path d="M4 8.500h10M4 11.500h10M4 14.500h6" stroke="#1e2b0d"/><circle cx="16" cy="22" r="8" fill="#3d3d3d" stroke="#888"/><text x="16" y="26" font-size="12" text-anchor="middle" fill="#fff">2</text></svg>
      <i class="w-px h-full bg-[#77806c] mr-1"></i>
    </div>
  </div>
</section>

<script>
const $ = id => document.getElementById(id);
const put = (id, rows) => { $(id).innerHTML = rows.join(''); };

put('nav', [
  ['dash','Dashboards'],['act','Activities'],['#','Customers'],['acc','Accounts'],['con','Contacts'],['#','Sales'],
  ['lead','Lead Data Banks'],['leads','Leads'],['opp','Opportunities'],['comp','Competitors'],['emp','Employees'],['#','Collateral'],
  ['quote','Quotes'],['proj','Projects'],['inv','Invoices'],['prod','Products'],['lit','Sales Literature']
].map(([i, t]) => i === '#'
  ? `<h2 class="h-[57px] pt-[14px] pl-[14px] flex items-center text-[13px] font-semibold">${t}</h2>`
  : `<a href="#" class="${t === 'Contacts' ? 'bg-white' : ''} h-[35px] flex items-center pl-1 text-[13px] text-[#444]"><i class="w-1 h-[21px] rounded-sm mr-[6px] ${t === 'Contacts' ? 'bg-[#0b66ff]' : ''}"></i><svg class="w-4 h-4 mr-[15px]"><use href="#i-${i}"/></svg>${t}</a>`));

const weeks = [[5,31,1,2,3,4,5,6],[6,7,8,9,10,11,12,13],[7,14,15,16,17,18,19,20],[8,21,22,23,24,25,26,27],[9,28,1,2,3,4,5,6]];
put('cal', ['<tr class="h-7"><th></th>' + [...'SMTWTFS'].map(d => `<th class="font-normal text-[#555]">${d}</th>`).join('') + '</tr>',
  ...weeks.map((w, r) => '<tr class="h-7">' + w.map((d, c) => {
    if (c === 0) return `<th class="font-normal text-[#444] border-r border-[#ddd]">${d}</th>`;
    if (r === 3 && c === 2) return '<td class="bg-[#e6e6e6] p-0"><span class="mx-auto w-6 h-6 rounded-full bg-[#0078d4] text-white font-bold grid place-items-center">22</span></td>';
    return `<td class="${r < 3 || (r === 3 && c === 1) ? 'text-[#bbb]' : r === 4 && c > 1 ? 'text-[#666]' : 'text-[#333]'}">${d}</td>`;
  }).join('') + '</tr>')]);
put('months', ['Jan','Feb','Mar','Apr','May','Jun','Jul','Aug','Sep','Oct','Nov','Dec'].map((m, i) => `<button class="h-14 ${i ? 'text-[#444]' : 'text-[#bbb]'}">${m}</button>`));

put('tree', ['Summary','Details','Files','Bing Business Autocomplete'].map(t => `<a href="#" class="h-[18px] -mt-[4px] mb-[4px] flex items-end"><i class="w-[5px] h-px bg-[#0072c6] mr-[5px] mb-[1px] shrink-0"></i><span class="whitespace-nowrap">${t}</span></a>`));

const doc = '<path d="M3 .500h8l3 3v12H3z" fill="#f4efe8" stroke="#a98f78"/>';
const lines = '<path d="M5 5h6M5 7.500h6M5 10h6M5 12.500h4" stroke="#b29a80"/>';
const gear = '<circle cx="11" cy="11" r="3.500" fill="#dbe6f5" stroke="#5b7fb5" stroke-width="2"/><circle cx="11" cy="11" r="1" fill="#5b7fb5"/>';
const clock = '<circle cx="12" cy="12" r="3.300" fill="#eef3fa" stroke="#7d93b0"/><path d="M12 10v2h1.500" stroke="#557" fill="none"/>';
const bdoc = '<path d="M3 .500h8l3 3v12H3z" fill="#f2f7fc" stroke="#8299b5"/>';
put('common', [
  ['Playbooks', bdoc + gear],
  ['Activities', bdoc + '<path d="M5 5h6M5 8h5M5 11h3" stroke="#9ab"/><path d="M6 13l7-8 2 2-7 7z" fill="#eda64a" stroke="#a8703a" stroke-width=".6"/>'],
  ['Entitlements', doc + lines + '<circle cx="12" cy="12" r="3" fill="#999"/>'],
  ['Social Profiles', doc + '<circle cx="8.500" cy="7.500" r="6" fill="#a2a2a2"/><path d="M8.500 4v4M5.500 9.500h2M9.500 9.500h2" stroke="#fff"/>'],
  ['Documents', doc + lines + '<path d="M8 9h6v5H8z" fill="#eee" stroke="#777"/>'],
  ['Connections', '<path d="M1 2h8v10H1zM8 5h7v10H8z" fill="#cfe0f3" stroke="#6f8fb5"/><path d="M3 3h5l-1 2 4 4 2-1v5H8l1-2-4-4-2 1z" fill="#ef9a4d" stroke="#b56a28" stroke-width=".6"/>'],
  ['Audit History', bdoc + '<path d="M5 9l2.500 3L12 5" fill="none" stroke="#2f9a50" stroke-width="1.600"/>'],
  ['Feedback', doc + lines + clock],
  ['External Identities', doc + '<path d="M5 8h8v6H5z" fill="#8d8d8d"/><path d="M6.500 8V5.500c0-3 5-3 5 0V8" fill="none" stroke="#8d8d8d" stroke-width="1.500"/>'],
  ['contact', doc + '<path d="M4 1h9v4H4z" fill="#f0bd5c" stroke="#b98a30" stroke-width=".6"/><path d="M5 8h6M8 6v5M4 13h8" stroke="#6f8fb5"/>' + clock],
  ['Case Deflections', doc + '<circle cx="5" cy="4" r="3" fill="#8a8a8a"/><path d="M1 12c0-6 8-6 8 0z" fill="#999"/><path d="M9 9h6v6H9z" fill="#ddd" stroke="#777"/>'],
  ['Badges', bdoc + gear],
  ['Ideas', '<circle cx="8" cy="6" r="5.500" fill="#999"/>' + '<path d="M3 12h11v4H3z" fill="#bbb"/>']
].map(([t, s], i) => `<li class="h-[22px] ${i ? 'mt-[3px]' : ''} border-y-2 border-dashed border-[#b0b5ba] flex items-center pl-[16px]"><svg class="w-4 h-4 mr-[6px]" viewBox="0 0 16 16">${s}</svg>${t}</li>`));

put('fields', [['Full Name'],['Last On Hold Time'],['Lockout End Date'],['Job Title'],['Account Name','Company Name'],['Email'],['Business Phone'],['Mobile Phone'],['Fax'],['Preferred Method of','Preferred Method of Contact']]
  .map(([l, p], i) => `<div class="h-[31px] px-1 flex items-center border ${i === 1 ? 'border-[#0072a3]' : 'border-dashed border-[#666]'} bg-[#e8edf2]"><label for="f${i}" class="flex-1 text-black whitespace-nowrap">${l}</label><input id="f${i}" placeholder="${p || l}" class="w-[136px] h-[21px] px-[2px] bg-white border border-[#c4c8cc] placeholder:text-[#c0c0c0]"></div>`));

put('attrs', ['Access Failed Count','Address 1: Address Type','Address 1: City','Address 1: Country/Region','Address 1: County','Address 1: Fax','Address 1: Latitude','Address 1: Longitude','Address 1: Name','Address 1: Phone','Address 1: Post Office Box','Address 1: Primary Contact Name']
  .map((t, i) => `<li class="${i ? 'h-[27px]' : 'h-[31px] pt-1'} border-b border-[#b5d6f7] flex items-center pl-[6px] whitespace-nowrap"><svg class="w-[13px] h-[14px] mr-[6px]"><use href="#i-page"/></svg>${t}</li>`));

const sheet = '<path d="M1.500 1.500h24v25h-24z" fill="#f8fbff" stroke="#7b93b5"/>';
put('ribbon', [
  ['Save', 'left-[7px] top-[11px] w-[30px] h-7', '0 0 30 28', '<circle cx="10" cy="16" r="10.500" fill="#2d7dbb"/><path d="M3 0h26v26H6l-3-3z" fill="#7d68ad" stroke="#5a478c"/><path d="M7 0h18v14H7z" fill="#f5f5fa"/><path d="M9 3h14M9 6.500h14M9 10h14" stroke="#bbb"/><path d="M9 18h14v8H9z" fill="#d9d6e8"/><path d="M11 19h4v7h-4z" fill="#4b3d78"/>'],
  ['Save As', 'left-[51px] top-[6px] w-4 h-4', '0 0 16 16', '<path d="M.500.500h14v13H.500z" fill="#6458b5" stroke="#40368c"/><path d="M3 1h9v5H3z" fill="#fff"/><path d="M4 9h6v4H4z" fill="#ddd"/><path d="M6 5l8 9" stroke="#e8b44b" stroke-width="3"/><path d="M13 13l2.500 2.500" stroke="#333" stroke-width="1.500"/>'],
  ['Save and Close', 'left-[51px] top-[29px] w-4 h-4', '0 0 16 16', '<path d="M0 5h12v11H0z" fill="#555"/><path d="M3 6h6v3H3zM4 11h5v4H4z" fill="#feef9b"/><path d="M3 4V1h3M12 1h3v12h-2M6 2.500h6M10 .500l2 2-2 2" fill="none" stroke="#666" stroke-width="1.300"/>'],
  ['Publish', 'left-[51px] top-[53px] w-4 h-4', '0 0 16 16', '<path d="M1 .500h7l3 3v12H1z" fill="#fff" stroke="#8ba0bb"/><circle cx="10.500" cy="10" r="5" fill="#3d86cc" stroke="#1e5b9c"/><path d="M10.500 6.500l3 3.500h-2v3h-2v-3h-2z" fill="#fff"/>'],
  ['Change Properties', 'left-[167px] top-[13px] w-[30px] h-[26px]', '0 0 30 26', '<path d="M1 1h12l2 3h14v20H1z" fill="#fbfdff" stroke="#6b86ad"/><path d="M15 1h13v4H15z" fill="#86aee0" stroke="#4d75ad"/><path d="M4 10h4M4 14h4M4 18h4M4 21.500h4M10 10h15M10 14h15M10 18h15M10 21.500h15" stroke="#7b93b5"/>'],
  ['Remove', 'left-[221px] top-[11px] w-[26px] h-7', '0 0 26 28', '<path d="M1 .500h18v25H1z" fill="#fbfdff" stroke="#7b93b5"/><path d="M3.500 5h13v4h-13zM3.500 12h13v4h-13z" fill="#fff" stroke="#8fa3bf"/><path d="M3.500 18.500h9v3h-9z" fill="#ffb3a0" stroke="#e88"/><path d="M11 14l13 12M24 13L12 27" stroke="#ef4a32" stroke-width="2.600"/>'],
  ['Undo', 'left-[258px] top-[6px] w-4 h-[14px]', '0 0 16 14', '<path d="M6 1L2 5l4 4M2 5h7c6 0 5 6 2 7.500" fill="none" stroke="#555" stroke-width="2"/>'],
  ['Redo', 'left-[258px] top-[30px] w-4 h-[14px]', '0 0 16 14', '<path d="M0 0h16v14H0z" fill="#fff6c8"/><path d="M10 1l4 4-4 4M14 5H7c-6 0-5 6-2 7.500" fill="none" stroke="#ddd3a0" stroke-width="2"/>'],
  ['Body', 'left-[324px] top-[9px] w-[26px] h-7', '0 0 26 28', '<path d="M2 1h22M2 26h22" stroke="#7d9cc0" stroke-dasharray="2 1.500"/><path d="M1.500 3.500h23v20h-23z" fill="#fde3c4" stroke="#e5901e" stroke-width="1.500"/><path d="M4 6h18v8L4 20z" fill="#fff1df"/>'],
  ['Header', 'left-[364px] top-[5px] w-[15px] h-4', '0 0 15 16', '<path d="M1 1h13v3H1z" fill="#fff" stroke="#e58a12" stroke-width="1.400"/><path d="M1.500 6h12v9.500h-12z" fill="#e6f1fb" stroke="#7da3cc" stroke-dasharray="2 1"/>'],
  ['Footer', 'left-[364px] top-[28px] w-[15px] h-[17px]', '0 0 15 17', '<path d="M1.500 1h12v10h-12z" fill="#e6f1fb" stroke="#7da3cc" stroke-dasharray="2 1"/><path d="M1 13h13v3H1z" fill="#fff" stroke="#e58a12" stroke-width="1.400"/>'],
  ['Navigation', 'left-[364px] top-[53px] w-4 h-4', '0 0 16 16', '<path d="M.500.500h15v14H.500z" fill="#dcebfb" stroke="#2a6bb8"/><path d="M0 0h16v3H0z" fill="#2a6bb8"/><path d="M1.500 4h6v11h-6z" fill="#fff" stroke="#e58a12" stroke-width="1.500"/><path d="M3 7h3M3 9.500h3M3 12h3" stroke="#e58a12"/>'],
  ['Business Rules', 'left-[455px] top-[7px] w-[31px] h-[31px]', '0 0 31 31', sheet + '<path d="M4 5h18v5H4z" fill="#fff" stroke="#e58a3a" stroke-width="1.500"/><path d="M4 13h12M4 16.500h18M4 20h10M4 23.500h8" stroke="#7b93b5"/><path d="M22 11l-6 9h5l-3 10 11-14h-6l5-5z" fill="#f8c34e" stroke="#c98a22" stroke-width=".7"/>'],
  ['Form Properties', 'left-[505px] top-[7px] w-[30px] h-[31px]', '0 0 30 31', '<path d="M1.500 7.500h27v22h-27z" fill="#f8fbff" stroke="#7b93b5"/><path d="M5 15h3M5 19h3M5 23h3M10 15h16M10 19h16M10 23h16M5 26.500h3M10 26.500h16" stroke="#8fa3bf"/><path d="M7 10l8-8 12-1v10l-10 2-3-2-7 2z" fill="#dca343" stroke="#8c6016"/><path d="M14 3l-2 7M18 4v7" stroke="#8c6016"/><path d="M26 0h4v12h-4z" fill="#2fa043"/>'],
  ['Preview', 'left-[553px] top-[8px] w-8 h-[30px]', '0 0 32 30', '<path d="M1 .500h14l6 6v18H1z" fill="#f8fbff" stroke="#7b93b5"/><path d="M3 5h8M3 9h14M3 13h10M3 17h8M3 21h10" stroke="#9fb2cc"/><circle cx="18" cy="15" r="8" fill="#b9dcf2" fill-opacity=".85" stroke="#8b98a8" stroke-width="2"/><path d="M24 21l6 7" stroke="#777" stroke-width="3.500"/>'],
  ['Enable Security Roles', 'left-[595px] top-[5px] w-4 h-4', '0 0 16 16', '<circle cx="4" cy="3.500" r="3" fill="#666"/><circle cx="10" cy="3" r="3" fill="#555"/><path d="M0 12c0-6 7-6 7 0zM7 10c0-5 6-5 6 0z" fill="#4d5f85"/><path d="M7 10h4V7l5 4.500L11 16v-3H7z" fill="#3f7fe0" stroke="#1c4fa8" stroke-width=".6"/>'],
  ['Show Dependencies', 'left-[595px] top-[29px] w-4 h-4', '0 0 16 16', '<path d="M.500 6h5v4h-5zM10.500.500h5v4h-5zM10.500 11h5v4h-5z" fill="#d5e6fa" stroke="#345"/><path d="M5 8h3M8 8l3-5M8 8l3 5" stroke="#234" stroke-width="1.400"/>'],
  ['Managed Properties', 'left-[595px] top-[54px] w-4 h-4', '0 0 16 16', '<circle cx="8" cy="8" r="4.500" fill="none" stroke="#606060" stroke-width="3"/><circle cx="8" cy="8" r="7" fill="none" stroke="#606060" stroke-width="2" stroke-dasharray="2.750 2.750"/>'],
  ['Preview options', 'left-[566px] top-[58px] w-[6px] h-1', '0 0 6 4', '<path d="M0 0h6L3 4z" fill="#333"/>'],
  ['Merge Forms', 'left-[734px] top-[8px] w-8 h-[31px]', '0 0 32 31', '<path d="M16 1h15v11H16z" fill="#eef5fd" stroke="#6b86ad"/><path d="M16 1h15v3H16z" fill="#6b93cc"/><path d="M.500 11h14l6 6v13H.500z" fill="#f8fbff" stroke="#5d7ba5"/><path d="M3 15h4M3 19h4M3 23h4M3 27h4M9 15h4M9 19h7M9 23h8M9 27h8" stroke="#7b93b5"/><path d="M21 22c4 0 4-3 4-5h-3l5-6 4 6h-2c0 4-3 6-8 6z" fill="#3cc23c" stroke="#1c8a1c" stroke-width=".7"/>']
].map(([l, c, v, s]) => `<button aria-label="${l}" class="absolute ${c}"><svg class="block w-full h-full" viewBox="${v}" fill="none">${s}</svg></button>`));

const cmd = '<path d="M1 3h22v18H1z" fill="#000" stroke="#999"/><path d="M1 3h22v2H1z" fill="#ccc"/><path d="M4 9.500h2M7 9v2M9 9v2M11 11.500h4" stroke="#ddd"/>';
put('apps', [
  ['Task View', '<path d="M4 4v2h10V4M4 20v-2h10v2M4 8.500h10v7H4zM18 4v16" fill="none" stroke="#fff" stroke-width="1.300"/><path d="M17 9h3v3h-3z" fill="#fff"/>', 0],
  ['File Explorer', '<path d="M2 3h8l1 2h11v16H2z" fill="#f7d774"/><path d="M2 7h20v14H2z" fill="#fde38f"/><path d="M5 21v-9h14v9h-4v-4H9v4z" fill="#37b0ea"/>', 1],
  ['Command Prompt', cmd, 0],
  ['Snipping Tool', '<ellipse cx="13" cy="9" rx="9.500" ry="7.500" fill="#eee" stroke="#b9b9b9" transform="rotate(-25 13 9)"/><path d="M2 12c0 6 7 8 11 6l-2 3c-5 1-10-3-9-9z" fill="#c0392b"/><path d="M8 12l8-7M13 5l4 13" stroke="#888"/><circle cx="14.500" cy="19" r="2.500" fill="none" stroke="#2f8fd0" stroke-width="1.500"/><circle cx="20" cy="17" r="2.500" fill="none" stroke="#2f8fd0" stroke-width="1.500"/>', 0],
  ['Google Chrome', '<circle cx="12" cy="12" r="11" fill="#fff"/><path d="M12 1a11 11 0 0 1 9.500 5.500H12a5.500 5.500 0 0 0-5 3.500L2.500 6.500A11 11 0 0 1 12 1z" fill="#e33b2e"/><path d="M2.500 6.500l4.700 8.200c1 1.800 3 3 5.500 2.600L10.500 23A11 11 0 0 1 2.500 6.500z" fill="#27a34a"/><path d="M21.500 6.500A11 11 0 0 1 10.500 23l5.800-8.500a5.500 5.500 0 0 0-1.500-8z" fill="#fcc31e"/><circle cx="12" cy="12" r="5" fill="#fff"/><circle cx="12" cy="12" r="4" fill="#4285f4"/>', 2],
  ['Sticky Notes', '<path d="M1 1h22v22H1z" fill="#fcd116"/><path d="M12 23V12h11z" fill="#555"/><path d="M12 23l11-11v11z" fill="#e0b400"/>', 1],
  ['Hourglass', '<circle cx="12" cy="12" r="12" fill="#fff"/><path d="M7 5h10v3l-4 4 4 4v3H7v-3l4-4-4-4z" fill="none" stroke="#f08a1d" stroke-width="2.200"/>', 1],
  ['Notepad++', '<path d="M2 1h18v22H2z" fill="#eef3ea" stroke="#888"/><path d="M2 12h18v11H2z" fill="#6cc02c"/><path d="M6 8v7M6 8h3M10 11.500h3M14 11.500h3" stroke="#222" stroke-width="1.400"/><path d="M21 1l-8 14-1 3 3-2 8-14z" fill="#f2c230" stroke="#a33"/>', 1],
  ['Console', cmd, 1],
  ['Skype', '<circle cx="12" cy="12" r="10" fill="#0b9be8"/><circle cx="6.500" cy="6.500" r="5" fill="#0b9be8"/><circle cx="17.500" cy="17.500" r="5" fill="#0b9be8"/><text x="12" y="17.500" font-size="15" font-weight="700" text-anchor="middle" fill="#fff">S</text>', 1],
  ['Edge', '<circle cx="12" cy="12" r="11.500" fill="#1b7fd0"/><path d="M1 10C3-3 23-3 23.500 10c0 5-6 6-9 4 3-3 1-7-3-7S3 9 1 10z" fill="#44c98a"/><path d="M1 10c3-6 11-4 11-1-4 3-3 9 4 10 3 0 5-1 6-2-3 7-21 9-21-7z" fill="#1464b4"/><circle cx="13" cy="12" r="3" fill="#1e2b0d"/>', 1],
  ['VS Code', '<path d="M17 1l6 3v16l-6 3L6 13l-4 3-1.500-1L5 12 .500 9 2 8l4 3zM17 7l-7 5 7 5z" fill="#1f8ad2" fill-rule="evenodd"/>', 1],
  ['Teams', '<circle cx="14" cy="4.500" r="3.500" fill="#6f75d6"/><circle cx="21" cy="6" r="2.500" fill="#5059c9"/><path d="M8 9h16v7c0 6-14 6-16 0z" fill="#6f75d6"/><path d="M0 6h13v12H0z" fill="#4048b0"/><text x="6.500" y="16" font-size="11" font-weight="700" text-anchor="middle" fill="#fff">T</text><circle cx="19" cy="18" r="6.500" fill="#c4262e"/><text x="19" y="22" font-size="11" text-anchor="middle" fill="#fff">1</text>', 1],
  ['Paint', '<path d="M1 14C1 6 8 3 14 4s9 6 7 10-5 1-7 3 0 5-4 5-9-3-9-8z" fill="#cfe3ee" stroke="#8aa"/><circle cx="6" cy="13" r="2" fill="#e5473c"/><circle cx="9" cy="8.500" r="2" fill="#3fae49"/><circle cx="15" cy="8.500" r="2" fill="#f5b82e"/><circle cx="7" cy="18" r="1.800" fill="#3d7fd0"/><path d="M22 1l-9 19" stroke="#b5703a" stroke-width="2.500"/>', 1]
].map(([l, s, m]) => `<button aria-label="${l}" class="w-[49px] h-10 px-1 pt-[7px] ${m === 2 ? 'bg-[#4b5440]' : ''} flex flex-col items-center justify-between"><svg class="w-6 h-6" viewBox="0 0 24 24">${s}</svg><i class="w-full h-[2px] ${m ? 'bg-[#d9f7a3]' : ''}"></i></button>`));
</script>
</body>
</html>
